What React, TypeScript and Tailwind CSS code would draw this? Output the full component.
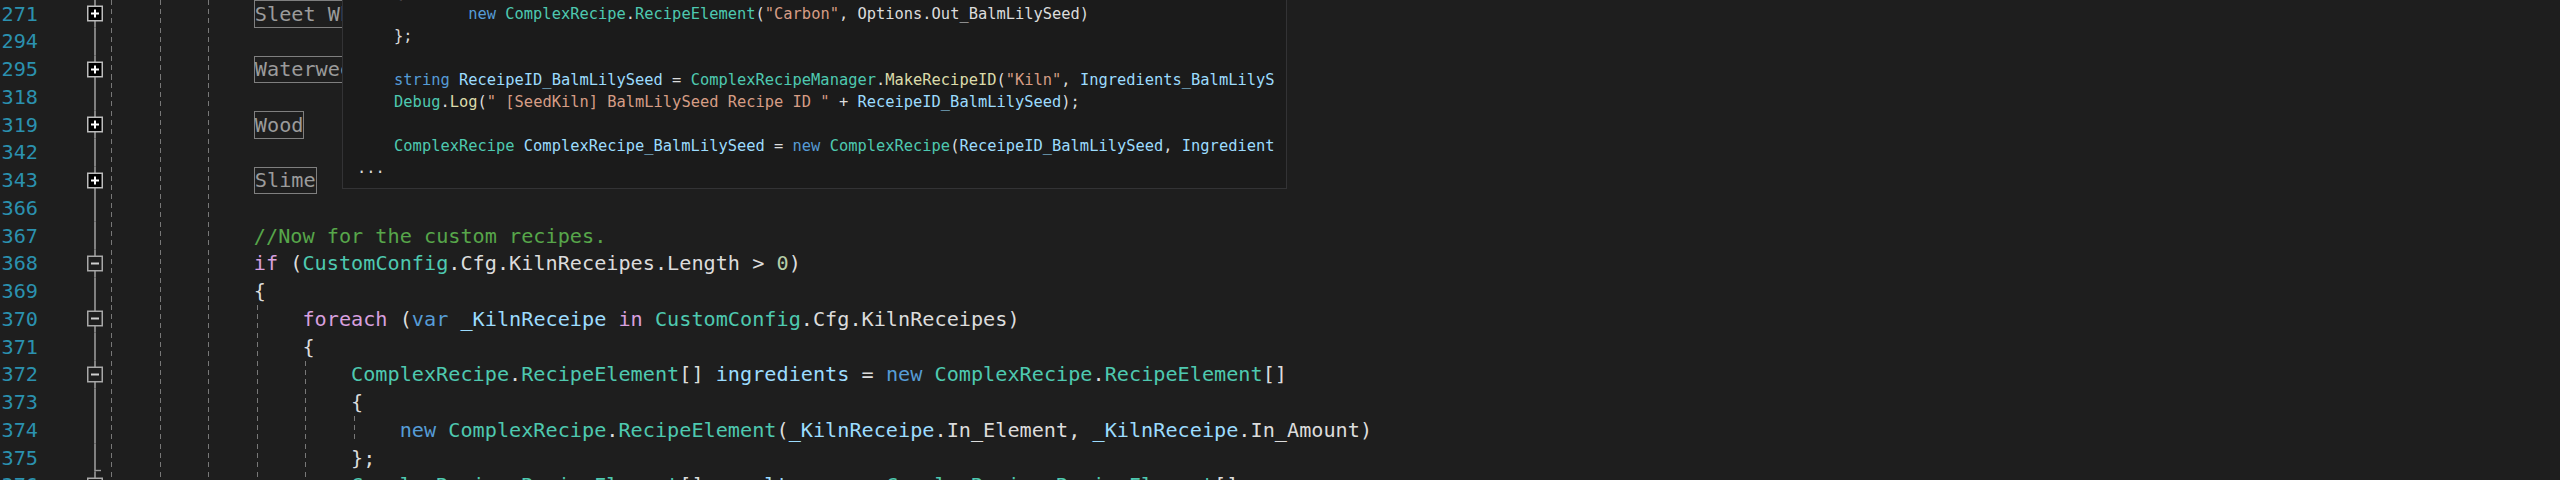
import React from "react";

type Kind = "text" | "kw" | "ctl" | "type" | "local" | "str" | "fn" | "num" | "cmt";
type Tok = [string, Kind?];

const color: Record<Kind, string> = {
  text: "text-[#dcdcdc]",
  kw: "text-[#569cd6]",
  ctl: "text-[#d8a0df]",
  type: "text-[#4ec9b0]",
  local: "text-[#9cdcfe]",
  str: "text-[#d69d85]",
  fn: "text-[#dcdcaa]",
  num: "text-[#b5cea8]",
  cmt: "text-[#57a64a]",
};

type Fold = "plus" | "minus" | "line" | "end";

interface Row {
  num: number;
  fold: Fold;
  guides: number;
  collapsed?: string;
  code?: Tok[];
}

const rows: Row[] = [
  { num: 271, fold: "plus", guides: 3, collapsed: "Sleet Wheat" },
  { num: 294, fold: "line", guides: 3 },
  { num: 295, fold: "plus", guides: 3, collapsed: "Waterweed" },
  { num: 318, fold: "line", guides: 3 },
  { num: 319, fold: "plus", guides: 3, collapsed: "Wood" },
  { num: 342, fold: "line", guides: 3 },
  { num: 343, fold: "plus", guides: 3, collapsed: "Slime" },
  { num: 366, fold: "line", guides: 3 },
  { num: 367, fold: "line", guides: 3, code: [["//Now for the custom recipes.", "cmt"]] },
  {
    num: 368,
    fold: "minus",
    guides: 3,
    code: [["if", "ctl"], [" ("], ["CustomConfig", "type"], [".Cfg.KilnReceipes.Length > "], ["0", "num"], [")"]],
  },
  { num: 369, fold: "line", guides: 3, code: [["{"]] },
  {
    num: 370,
    fold: "minus",
    guides: 4,
    code: [
      ["foreach", "ctl"],
      [" ("],
      ["var", "kw"],
      [" "],
      ["_KilnReceipe", "local"],
      [" "],
      ["in", "ctl"],
      [" "],
      ["CustomConfig", "type"],
      [".Cfg.KilnReceipes)"],
    ],
  },
  { num: 371, fold: "line", guides: 4, code: [["{"]] },
  {
    num: 372,
    fold: "minus",
    guides: 5,
    code: [
      ["ComplexRecipe", "type"],
      ["."],
      ["RecipeElement", "type"],
      ["[] "],
      ["ingredients", "local"],
      [" = "],
      ["new", "kw"],
      [" "],
      ["ComplexRecipe", "type"],
      ["."],
      ["RecipeElement", "type"],
      ["[]"],
    ],
  },
  { num: 373, fold: "line", guides: 5, code: [["{"]] },
  {
    num: 374,
    fold: "line",
    guides: 6,
    code: [
      ["new", "kw"],
      [" "],
      ["ComplexRecipe", "type"],
      ["."],
      ["RecipeElement", "type"],
      ["("],
      ["_KilnReceipe", "local"],
      [".In_Element, "],
      ["_KilnReceipe", "local"],
      [".In_Amount)"],
    ],
  },
  { num: 375, fold: "end", guides: 5, code: [["};"]] },
  {
    num: 376,
    fold: "minus",
    guides: 5,
    code: [
      ["ComplexRecipe", "type"],
      ["."],
      ["RecipeElement", "type"],
      ["[] "],
      ["results", "local"],
      [" = "],
      ["new", "kw"],
      [" "],
      ["ComplexRecipe", "type"],
      ["."],
      ["RecipeElement", "type"],
      ["[]"],
    ],
  },
];

const tip: Tok[][] = [
  [["    {"]],
  [
    ["            "],
    ["new", "kw"],
    [" "],
    ["ComplexRecipe", "type"],
    ["."],
    ["RecipeElement", "type"],
    ["("],
    ['"Carbon"', "str"],
    [", Options.Out_BalmLilySeed)"],
  ],
  [["    };"]],
  [],
  [
    ["    "],
    ["string", "kw"],
    [" "],
    ["ReceipeID_BalmLilySeed", "local"],
    [" = "],
    ["ComplexRecipeManager", "type"],
    ["."],
    ["MakeRecipeID", "fn"],
    ["("],
    ['"Kiln"', "str"],
    [", "],
    ["Ingredients_BalmLilyS", "local"],
  ],
  [
    ["    "],
    ["Debug", "type"],
    ["."],
    ["Log", "fn"],
    ["("],
    ['" [SeedKiln] BalmLilySeed Recipe ID "', "str"],
    [" + "],
    ["ReceipeID_BalmLilySeed", "local"],
    [");"],
  ],
  [],
  [
    ["    "],
    ["ComplexRecipe", "type"],
    [" "],
    ["ComplexRecipe_BalmLilySeed", "local"],
    [" = "],
    ["new", "kw"],
    [" "],
    ["ComplexRecipe", "type"],
    ["("],
    ["ReceipeID_BalmLilySeed", "local"],
    [", "],
    ["Ingredient", "local"],
  ],
  [["..."]],
];

const Tokens = ({ toks }: { toks: Tok[] }) => (
  <>
    {toks.map(([t, k], i) => (
      <span key={i} className={color[k ?? "text"]}>
        {t}
      </span>
    ))}
  </>
);

// outlining margin: line, +/- boxes, end tick
const FoldCell = ({ fold }: { fold: Fold }) => (
  <svg width="18" height="27.75" viewBox="0 0 18 27.75" className="shrink-0">
    <line x1="9" y1="0" x2="9" y2="27.75" stroke="#9a9a9a" strokeWidth="1.6" />
    {fold === "end" && <line x1="9" y1="26.5" x2="15" y2="26.5" stroke="#9a9a9a" strokeWidth="1.4" />}
    {fold === "plus" && (
      <>
        <rect x="1.75" y="6.25" width="14.5" height="14.5" fill="#000" stroke="#bdbdbd" strokeWidth="1.5" />
        <line x1="5" y1="13.5" x2="13" y2="13.5" stroke="#fff" strokeWidth="2" />
        <line x1="9" y1="9.5" x2="9" y2="17.5" stroke="#fff" strokeWidth="2" />
      </>
    )}
    {fold === "minus" && (
      <>
        <rect x="1.75" y="6.25" width="14.5" height="14.5" fill="#1e1e1e" stroke="#a8a8a8" strokeWidth="1.5" />
        <line x1="5" y1="13.5" x2="13" y2="13.5" stroke="#cfcfcf" strokeWidth="2" />
      </>
    )}
  </svg>
);

const Indent = () => (
  <span className="h-full w-[4ch] shrink-0 bg-[repeating-linear-gradient(to_bottom,#787878_0_5px,transparent_5px_9.25px)] bg-[length:1px_100%] bg-[position:3px_0] bg-no-repeat" />
);

const EditorRow = ({ row }: { row: Row }) => (
  <div className="flex h-[27.75px] items-center">
    <div className="w-[40px] shrink-0 pr-[2px] text-right text-[#2b91af]">{row.num}</div>
    <div className="w-[46px] shrink-0" />
    <FoldCell fold={row.fold} />
    <div className="w-[4px] shrink-0" />
    <div className="flex h-full items-center whitespace-pre">
      {Array.from({ length: row.guides }).map((_, i) => (
        <Indent key={i} />
      ))}
      {row.collapsed && (
        <span className="flex h-full items-center border border-[#7f7f7f] text-[#9b9b9b]">{row.collapsed}</span>
      )}
      {row.code && <Tokens toks={row.code} />}
    </div>
  </div>
);

const QuickInfo = () => (
  <div className="absolute left-[342px] top-[-30px] z-10 h-[219px] w-[945px] overflow-hidden border border-[#333335] bg-[#1b1b1b] pl-[14px] pt-[10px] text-[15.4px] leading-[22px]">
    {tip.map((line, i) => (
      <div key={i} className="h-[22px] whitespace-pre">
        <Tokens toks={line} />
      </div>
    ))}
  </div>
);

export default function App() {
  return (
    <div className="relative h-[480px] w-[2560px] overflow-hidden bg-[#1e1e1e] font-['DejaVu_Sans_Mono',monospace] text-[20.2px] text-[#dcdcdc]">
      <div className="flex flex-col">
        {rows.map((r) => (
          <EditorRow key={r.num} row={r} />
        ))}
      </div>
      <QuickInfo />
    </div>
  );
}
